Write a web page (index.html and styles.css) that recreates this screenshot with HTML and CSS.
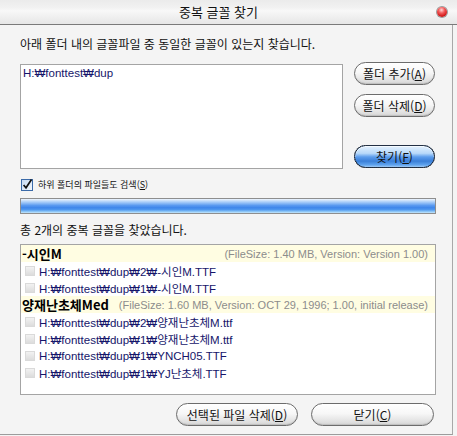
FILE: index.html
```html
<!DOCTYPE html>
<html lang="ko">
<head>
<meta charset="utf-8">
<title>중복 글꼴 찾기</title>
<link rel="stylesheet" href="styles.css">
</head>
<body>
<div class="window">
  <div class="titlebar">
    <span class="title">중복 글꼴 찾기</span>
    <span class="close-dot"></span>
  </div>
  <div class="body">
    <p class="intro">아래 폴더 내의 글꼴파일 중 동일한 글꼴이 있는지 찾습니다.</p>
    <div class="top">
      <div class="folders">H:₩fonttest₩dup</div>
      <div class="side">
        <button class="pill">폴더 추가(<u>A</u>)</button>
        <button class="pill">폴더 삭제(<u>D</u>)</button>
        <button class="pill primary">찾기(<u>F</u>)</button>
      </div>
    </div>
    <label class="check">
      <svg class="cb" width="13" height="13" viewBox="0 0 13 13">
        <defs>
          <linearGradient id="cbg" x1="0" y1="0" x2="1" y2="1">
            <stop offset="0" stop-color="#c4d8f0"/>
            <stop offset="1" stop-color="#f4f8fd"/>
          </linearGradient>
        </defs>
        <rect x="0.5" y="1.5" width="11" height="11" fill="url(#cbg)" stroke="#3b6aa8"/>
        <path d="M2.6 7 L5 9.8 L10.5 1.5" fill="none" stroke="#111" stroke-width="1.7"/>
      </svg>
      <span>하위 폴더의 파일들도 검색(<u>S</u>)</span>
    </label>
    <div class="progress"></div>
    <p class="summary">총 2개의 중복 글꼴을 찾았습니다.</p>
    <div class="list">
      <div class="row group"><b>-시인M</b><span class="info">(FileSize: 1.40 MB, Version: Version 1.00)</span></div>
      <div class="row item"><span class="box"></span>H:₩fonttest₩dup₩2₩-시인M.TTF</div>
      <div class="row item"><span class="box"></span>H:₩fonttest₩dup₩1₩-시인M.TTF</div>
      <div class="row group"><b>양재난초체Med</b><span class="info">(FileSize: 1.60 MB, Version: OCT 29, 1996; 1.00, initial release)</span></div>
      <div class="row item"><span class="box"></span>H:₩fonttest₩dup₩2₩양재난초체M.ttf</div>
      <div class="row item"><span class="box"></span>H:₩fonttest₩dup₩1₩양재난초체M.ttf</div>
      <div class="row item"><span class="box"></span>H:₩fonttest₩dup₩1₩YNCH05.TTF</div>
      <div class="row item"><span class="box"></span>H:₩fonttest₩dup₩1₩YJ난초체.TTF</div>
    </div>
    <div class="bottom">
      <button class="pill del">선택된 파일 삭제(<u>D</u>)</button>
      <button class="pill shut">닫기(<u>C</u>)</button>
    </div>
  </div>
</div>
</body>
</html>
```
FILE: styles.css
```css
html, body {
  margin: 0;
  padding: 0;
  background: #f4f4f4;
}
body {
  font-family: "Noto Sans CJK KR", "Noto Sans", sans-serif;
  color: #111;
}
.window {
  width: 457px;
  height: 436px;
  background: #f4f4f4;
  overflow: hidden;
}
.titlebar {
  height: 24px;
  border-bottom: 1px solid #7a7a7a;
  background: linear-gradient(#ebebeb 0%, #f1f1f1 30%, #f8f8f8 45%, #eeeeee 75%, #e6e6e6 100%);
  display: flex;
  align-items: center;
  padding-right: 10px;
}
.title {
  flex: 1;
  text-align: center;
  font-size: 13px;
  line-height: 16px;
  color: #111;
}
.close-dot {
  width: 10px;
  height: 10px;
  border-radius: 50%;
  background: radial-gradient(circle at 45% 30%, #ffd6d6 0%, #f25a5a 35%, #d01818 70%, #8a0c0c 100%);
  box-shadow: 0 0 0 1px #9a9a9a;
}
.body {
  box-sizing: border-box;
  width: 453px;
  height: 410px;
  padding: 0 16px 0 20px;
  border-right: 1px solid #a8a8a8;
  border-bottom: 1px solid #9c9c9c;
  display: flex;
  flex-direction: column;
}
.intro {
  margin: 12px 0 0;
  font-size: 12px;
  line-height: 14px;
  height: 14px;
}
.top {
  display: flex;
  gap: 11px;
  margin-top: 11px;
}
.folders {
  box-sizing: border-box;
  width: 323px;
  height: 105px;
  margin-top: 2px;
  border: 1px solid #a4a4a4;
  background: #fff;
  padding: 1px 2px;
  font-family: "Liberation Sans", "Noto Sans CJK KR", sans-serif;
  font-size: 11.5px;
  line-height: 14px;
  color: #15156a;
}
.side {
  width: 81px;
  display: flex;
  flex-direction: column;
}
.pill {
  box-sizing: border-box;
  height: 23px;
  padding: 0;
  border: 1px solid #6c6c6c;
  border-radius: 12px;
  background: linear-gradient(#ffffff 0%, #f7f7f7 45%, #e9e9e9 70%, #d6d6d6 100%);
  box-shadow: inset 0 1px 0 #fff, inset 0 -1px 1px rgba(0,0,0,0.12);
  font-family: "Noto Sans CJK KR", sans-serif;
  font-size: 12px;
  line-height: 14px;
  color: #111;
}
.pill u {
  text-decoration: underline;
  text-underline-offset: 1px;
}
.side .pill + .pill {
  margin-top: 9px;
}
.side .pill.primary {
  margin-top: 28px;
  border-color: #243f66;
  background: linear-gradient(#e4f1fd 0%, #b8d9fa 35%, #5d9ded 52%, #3a7fd8 72%, #5fa3ee 90%, #9dcaf6 100%);
  box-shadow: inset 0 1px 0 #f4faff;
  outline: 1px dotted #222;
  outline-offset: -1px;
}
.check {
  display: flex;
  align-items: center;
  gap: 4px;
  height: 13px;
  margin-top: 9px;
  font-size: 9px;
  line-height: 11px;
  color: #111;
}
.cb {
  display: block;
  flex: none;
  margin-left: 1px;
}
.progress {
  box-sizing: border-box;
  height: 16px;
  margin-top: 7px;
  border: 1px solid #8e8e8e;
  background: linear-gradient(#eef5fe 0%, #c2dcfa 14%, #8fbdf6 30%, #5a9af0 46%, #3f86ea 62%, #4f98ef 76%, #8ec7f7 90%, #c6e6fb 100%);
}
.summary {
  margin: 9px 0 0;
  font-size: 12px;
  line-height: 14px;
  height: 14px;
}
.list {
  box-sizing: border-box;
  height: 151px;
  margin-top: 7px;
  border: 1px solid #a4a4a4;
  background: #fff;
}
.row {
  height: 17px;
  display: flex;
  align-items: center;
  white-space: nowrap;
}
.group {
  background: #fffde2;
  padding: 0 7px 0 1px;
  justify-content: space-between;
}
.group b {
  font-family: "Noto Sans CJK KR", sans-serif;
  font-weight: 700;
  font-size: 13px;
  color: #000;
}
.info {
  font-family: "Liberation Sans", sans-serif;
  font-size: 11px;
  color: #8c8c8c;
}
.item {
  padding-left: 4px;
  font-family: "Liberation Sans", "Noto Sans CJK KR", sans-serif;
  font-size: 11.5px;
  color: #15156a;
}
.box {
  box-sizing: border-box;
  width: 10px;
  height: 10px;
  margin-right: 4px;
  border: 1px solid #dadada;
  background: linear-gradient(#f2f2f2, #dcdcdc);
}
.bottom {
  display: flex;
  justify-content: flex-end;
  gap: 13px;
  margin-top: 8px;
  padding-right: 2px;
}
.pill.del {
  width: 122px;
}
.pill.shut {
  width: 123px;
}
```
